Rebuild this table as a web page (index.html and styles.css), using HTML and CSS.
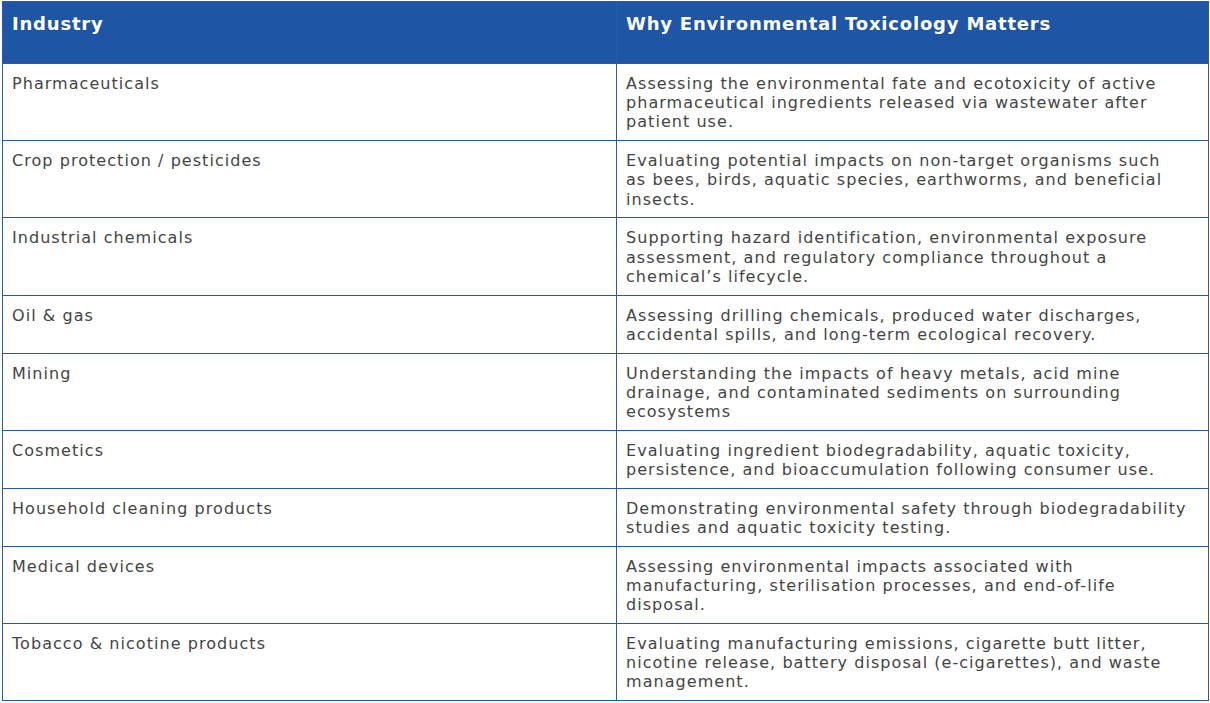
FILE: index.html
```html
<!DOCTYPE html>
<html lang="en">
<head>
<meta charset="utf-8">
<title>Industries and Environmental Toxicology</title>
<link rel="stylesheet" href="styles.css">
</head>
<body>
<table class="tox-table">
  <colgroup>
    <col class="col-industry">
    <col class="col-why">
  </colgroup>
  <thead>
    <tr>
      <th>Industry</th>
      <th>Why Environmental Toxicology Matters</th>
    </tr>
  </thead>
  <tbody>
    <tr>
      <td>Pharmaceuticals</td>
      <td>Assessing the environmental fate and ecotoxicity of active pharmaceutical ingredients released via wastewater after patient use.</td>
    </tr>
    <tr>
      <td>Crop protection / pesticides</td>
      <td>Evaluating potential impacts on non-target organisms such as&nbsp;bees, birds, aquatic species, earthworms, and beneficial insects.</td>
    </tr>
    <tr>
      <td>Industrial chemicals</td>
      <td>Supporting hazard identification, environmental exposure assessment, and regulatory compliance throughout a chemical’s lifecycle.</td>
    </tr>
    <tr>
      <td>Oil &amp; gas</td>
      <td>Assessing drilling chemicals, produced water discharges, accidental spills, and long-term ecological recovery.</td>
    </tr>
    <tr>
      <td>Mining</td>
      <td>Understanding the impacts of heavy metals, acid mine drainage, and contaminated sediments on surrounding ecosystems</td>
    </tr>
    <tr>
      <td>Cosmetics</td>
      <td>Evaluating ingredient biodegradability, aquatic toxicity, persistence, and bioaccumulation following consumer use.</td>
    </tr>
    <tr>
      <td>Household cleaning products</td>
      <td>Demonstrating environmental safety through biodegradability studies and aquatic toxicity testing.</td>
    </tr>
    <tr>
      <td>Medical devices</td>
      <td>Assessing environmental impacts associated with manufacturing, sterilisation processes, and end-of-life disposal.</td>
    </tr>
    <tr>
      <td>Tobacco &amp; nicotine products</td>
      <td>Evaluating manufacturing emissions, cigarette butt litter, nicotine release, battery disposal (e-cigarettes), and waste management.</td>
    </tr>
  </tbody>
</table>
</body>
</html>
```
FILE: styles.css
```css
html, body {
  margin: 0;
  padding: 0;
  background: #ffffff;
}

body {
  padding: 1px 0 0 2px;
  font-family: "DejaVu Sans", "Liberation Sans", sans-serif;
}

.tox-table {
  width: 1207px;
  table-layout: fixed;
  border-collapse: collapse;
}

.col-industry {
  width: 614px;
}

.tox-table th,
.tox-table td {
  border: 1px solid #2a5aa6;
  text-align: left;
  vertical-align: top;
}

.tox-table th {
  background: #1e55a5;
  color: #ffffff;
  font-size: 18px;
  font-weight: 700;
  letter-spacing: 0.8px;
  line-height: 22px;
  padding: 11px 9px 28px 9px;
}

.tox-table td {
  color: #444444;
  font-size: 16px;
  font-weight: 400;
  letter-spacing: 1.05px;
  line-height: 19.2px;
  padding: 10px 9px 8.6px 9px;
}
```
